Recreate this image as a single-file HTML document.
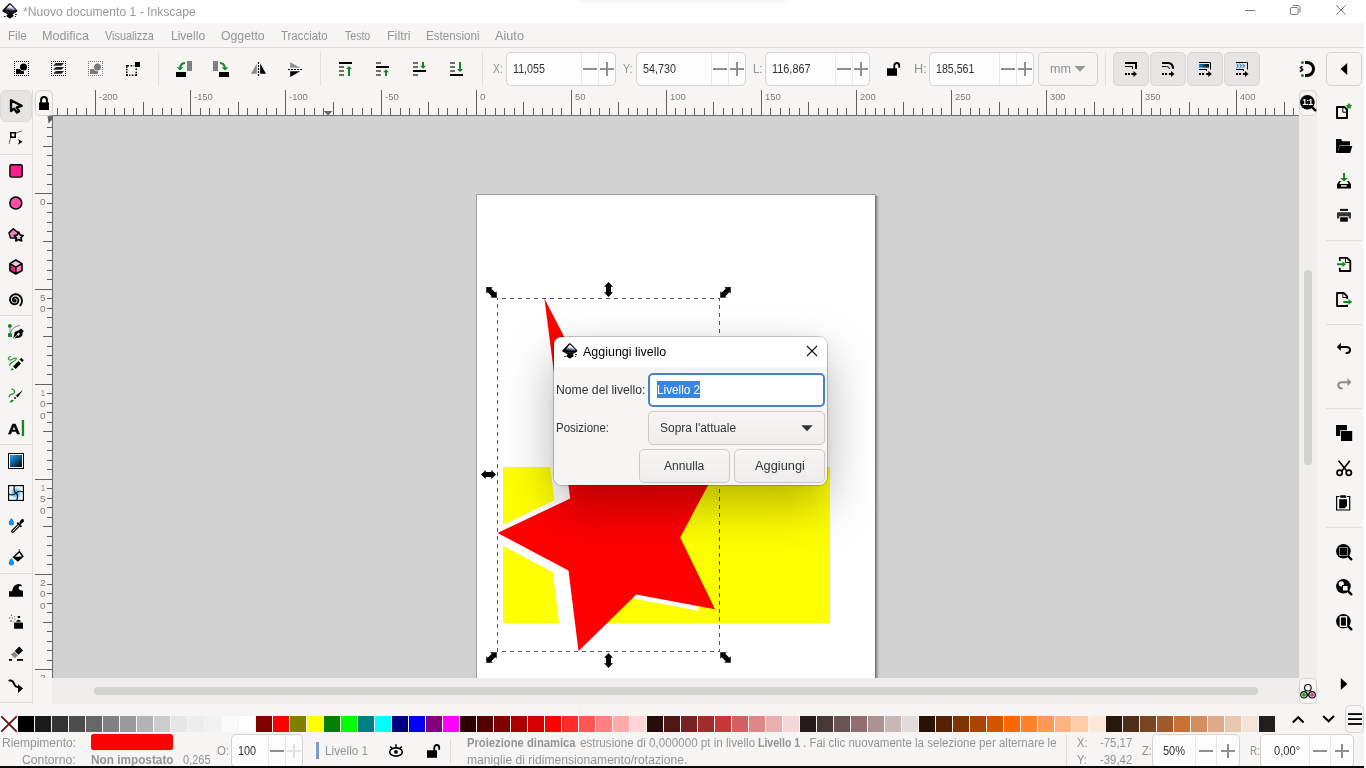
<!DOCTYPE html>
<html lang="it"><head><meta charset="utf-8"><title>*Nuovo documento 1 - Inkscape</title>
<style>
html,body{margin:0;padding:0}
body{width:1366px;height:768px;position:relative;overflow:hidden;background:#fff;font-family:"Liberation Sans",sans-serif;font-size:12px}
#win{position:absolute;left:0;top:0;width:1364px;height:766px;background:#f6f5f4;overflow:hidden;will-change:transform}
#win div,#win span.t,#win svg.i,#dlg div,#dlg span.t,#dlg svg.i{position:absolute;box-sizing:border-box}
span.t{white-space:nowrap}
svg.i{overflow:visible}
.sp{background:#fcfcfc;border:1px solid #d6d2ce;border-radius:5px}
.vl{background:#e3e0dd;width:1px}
.btn{border:1px solid #d6d2ce;border-radius:5px;background:#f6f5f4}
.tog{border:1px solid #d9d6d2;border-radius:5px;background:#e6e5e3}
#dlg{position:absolute;left:554px;top:337px;width:273px;height:148px;border-radius:8px;background:#f6f5f4;overflow:hidden;will-change:transform}
#dlgsh{position:absolute;left:554px;top:337px;width:273px;height:148px;border-radius:8px;box-shadow:0 0 0 1px rgba(0,0,0,.20),0 20px 50px rgba(0,0,0,.30),0 0 12px rgba(0,0,0,.05)}
</style></head><body>
<div id="win">
<div style="left:0px;top:0px;width:1364px;height:23px;background:#fff"></div>
<div style="left:576px;top:-15px;width:214px;height:14px;border-radius:7px;box-shadow:0 1px 7px rgba(0,0,0,.09)"></div>
<svg class="i" style="left:2px;top:3px;" width="16" height="16" viewBox="0 0 16 16"><defs><linearGradient id="ikg1" x1="0.62" y1="0.05" x2="0.35" y2="1"><stop offset="0" stop-color="#ffffff"/><stop offset="0.38" stop-color="#f0f4f9"/><stop offset="0.62" stop-color="#7186a0"/><stop offset="0.85" stop-color="#1a2430"/><stop offset="1" stop-color="#000"/></linearGradient></defs><path d="M7 0.600Q7.800 -0.200 8.600 0.600L15.200 7.200Q15.700 7.900 15 8.500L13.200 9.800H2.600L0.600 8.500Q-0.100 7.900 0.500 7.200z" fill="#000"/><path d="M7.900 1.400L14 7.300Q11 8.400 7.800 8.400T2.400 7.600z" fill="url(#ikg1)"/><path d="M2.600 9.400H13.200L11 11.200Q10.300 11.700 11 12.100L11.600 12.500Q12 12.900 11.500 13.300L8.600 15.200Q7.900 15.600 7.200 15.200L4.600 13.400Q4.100 13 4.600 12.600L5.300 12.100Q5.900 11.600 5.200 11.200z" fill="#000"/><ellipse cx="2.800" cy="13.400" rx="1" ry="0.500" fill="#000"/><ellipse cx="14" cy="11.500" rx="1" ry="0.500" fill="#000"/><ellipse cx="13.500" cy="13.400" rx="0.600" ry="0.500" fill="#000"/></svg>
<span class="t" style="top:4.00px;font-size:12px;line-height:16px;color:#9a9a9a;left:23.20px;transform:scaleX(1.0109);transform-origin:0 0;">*Nuovo documento 1 - Inkscape</span>
<svg class="i" style="left:1230px;top:0" width="134" height="23" viewBox="0 0 134 23" fill="none" stroke="#7a7a7a" stroke-width="1"><path d="M15 10.5h10"/><path d="M62.600 5.500H68Q70 5.500 70 7.500V12.600"/><rect x="60.500" y="7.500" width="7.600" height="7" rx="1.300"/><path d="M106.200 5.200l9.600 9.600M115.800 5.200l-9.600 9.600"/></svg>
<div style="left:0px;top:47px;width:1364px;height:1px;background:#dcd8d4"></div>
<span class="t" style="top:28.00px;font-size:12px;line-height:16px;color:#929595;left:7.75px;transform:scaleX(0.9653);transform-origin:0 0;">File</span>
<span class="t" style="top:28.00px;font-size:12px;line-height:16px;color:#929595;left:41.57px;transform:scaleX(1.0504);transform-origin:0 0;">Modifica</span>
<span class="t" style="top:28.00px;font-size:12px;line-height:16px;color:#929595;left:105.45px;transform:scaleX(0.9060);transform-origin:0 0;">Visualizza</span>
<span class="t" style="top:28.00px;font-size:12px;line-height:16px;color:#929595;left:170.91px;transform:scaleX(1.0021);transform-origin:0 0;">Livello</span>
<span class="t" style="top:28.00px;font-size:12px;line-height:16px;color:#929595;left:221.12px;transform:scaleX(1.0210);transform-origin:0 0;">Oggetto</span>
<span class="t" style="top:28.00px;font-size:12px;line-height:16px;color:#929595;left:281.14px;transform:scaleX(0.9532);transform-origin:0 0;">Tracciato</span>
<span class="t" style="top:28.00px;font-size:12px;line-height:16px;color:#929595;left:344.66px;transform:scaleX(0.8790);transform-origin:0 0;">Testo</span>
<span class="t" style="top:28.00px;font-size:12px;line-height:16px;color:#929595;left:386.78px;transform:scaleX(1.0400);transform-origin:0 0;">Filtri</span>
<span class="t" style="top:28.00px;font-size:12px;line-height:16px;color:#929595;left:425.85px;transform:scaleX(0.9669);transform-origin:0 0;">Estensioni</span>
<span class="t" style="top:28.00px;font-size:12px;line-height:16px;color:#929595;left:495.18px;transform:scaleX(1.0587);transform-origin:0 0;">Aiuto</span>
<svg class="i" style="left:14px;top:61px;" width="16" height="16" viewBox="0 0 16 16"><path d="M0 0.500H15M0 14.500H15" stroke="#000" stroke-width="1" stroke-dasharray="1 1" fill="none"/><path d="M0.500 2V14M14.500 2V14" stroke="#000" stroke-width="1" stroke-dasharray="1 1" fill="none"/><rect x="2" y="8" width="8" height="5" fill="#000"/><circle cx="9.500" cy="6" r="4.200" fill="#f6f5f4"/><circle cx="9.500" cy="6" r="3.500" fill="#000"/></svg>
<svg class="i" style="left:51px;top:61px;" width="16" height="16" viewBox="0 0 16 16"><path d="M0 0.500H15M0 14.500H15" stroke="#000" stroke-width="1" stroke-dasharray="1 1" fill="none"/><path d="M0.500 2V14M14.500 2V14" stroke="#000" stroke-width="1" stroke-dasharray="1 1" fill="none"/><path d="M4.800 2.100h8.200l-2.500 2.600h-8.300zM4.800 6.100h8.200l-2.500 2.700h-8.300zM4.800 10.100h8.200l-2.500 2.700h-8.300z" fill="#222"/></svg>
<svg class="i" style="left:88px;top:61px;" width="16" height="16" viewBox="0 0 16 16"><path d="M0 0.500H15M0 14.500H15" stroke="#7d7d7d" stroke-width="1" stroke-dasharray="1 1" fill="none"/><path d="M0.500 2V14M14.500 2V14" stroke="#7d7d7d" stroke-width="1" stroke-dasharray="1 1" fill="none"/><rect x="2" y="8" width="8" height="5" fill="#7a7a7a"/><circle cx="9.500" cy="6" r="4.200" fill="#f6f5f4"/><circle cx="9.500" cy="6" r="3.500" fill="#7a7a7a"/></svg>
<svg class="i" style="left:125px;top:61px;" width="16" height="16" viewBox="0 0 16 16"><path d="M1.750 7V4.750H4M5.600 4.750h1.600M8.600 4.750h1.500M11.250 7.500v1.600M11.250 10.700v1.500M11.250 13v1.250H9.800M8.400 14.250H6.800M5.400 14.250H4M3 14.250H1.750V13M1.750 12v-1.500M1.750 9.200V7.700" fill="none" stroke="#000" stroke-width="1.500"/><rect x="9.300" y="0.300" width="6.400" height="6.400" fill="#f6f5f4"/><rect x="10" y="1" width="5" height="5" fill="#000"/></svg>
<div class="vl" style="left:158px;top:52px;width:1px;height:34px;"></div>
<svg class="i" style="left:176px;top:61px;" width="16" height="16" viewBox="0 0 16 16"><rect x="11" y="0" width="5" height="10" fill="#808080"/><rect x="0" y="11" width="10" height="5" fill="#000"/><path d="M9 1.900q-4.300 0.300-4.900 4.800" fill="none" stroke="#12881f" stroke-width="2"/><path d="M0.800 6.200h6.600L4 9.600z" fill="#12881f"/></svg>
<svg class="i" style="left:213px;top:61px;" width="16" height="16" viewBox="0 0 16 16"><g transform="translate(16,0) scale(-1,1)"><rect x="11" y="0" width="5" height="10" fill="#808080"/><rect x="0" y="11" width="10" height="5" fill="#000"/><path d="M9 1.900q-4.300 0.300-4.900 4.800" fill="none" stroke="#12881f" stroke-width="2"/><path d="M0.800 6.200h6.600L4 9.600z" fill="#12881f"/></g></svg>
<svg class="i" style="left:250px;top:61px;" width="16" height="16" viewBox="0 0 16 16"><path d="M6.800 2.500V12.700H1z" fill="#8c8c8c"/><path d="M10.200 2.500V12.700H16z" fill="#000"/><path d="M8.500 1V15" stroke="#000" stroke-width="1.200" stroke-dasharray="2 1" fill="none"/></svg>
<svg class="i" style="left:287px;top:61px;" width="16" height="16" viewBox="0 0 16 16"><path d="M3.200 1.200V6.800H13.200z" fill="#8c8c8c"/><path d="M3.200 16V10.200H13.200z" fill="#000"/><path d="M1 8.500H15.500" stroke="#000" stroke-width="1.200" stroke-dasharray="2 1" fill="none"/></svg>
<div class="vl" style="left:320px;top:52px;width:1px;height:34px;"></div>
<svg class="i" style="left:338px;top:61px;" width="16" height="16" viewBox="0 0 16 16"><rect x="1" y="1" width="13" height="2" fill="#000"/><rect x="1" y="5" width="5" height="2" fill="#6e6e6e"/><rect x="1" y="9" width="5" height="2" fill="#6e6e6e"/><rect x="1" y="13" width="5" height="2" fill="#6e6e6e"/><path d="M10 15V8H8L11 5L14 8H12V15z" fill="#12881f"/></svg>
<svg class="i" style="left:375px;top:61px;" width="16" height="16" viewBox="0 0 16 16"><rect x="1" y="1" width="5" height="2" fill="#6e6e6e"/><rect x="1" y="5" width="13" height="2" fill="#000"/><rect x="1" y="9" width="5" height="2" fill="#6e6e6e"/><rect x="1" y="13" width="5" height="2" fill="#6e6e6e"/><path d="M10 15V11.2H8L11 8.2L14 11.2H12V15z" fill="#12881f"/></svg>
<svg class="i" style="left:412px;top:61px;" width="16" height="16" viewBox="0 0 16 16"><rect x="1" y="1" width="5" height="2" fill="#6e6e6e"/><rect x="1" y="5" width="5" height="2" fill="#6e6e6e"/><rect x="1" y="9" width="13" height="2" fill="#000"/><rect x="1" y="13" width="5" height="2" fill="#6e6e6e"/><path d="M10 1V4.8H8L11 7.8L14 4.8H12V1z" fill="#12881f"/></svg>
<svg class="i" style="left:449px;top:61px;" width="16" height="16" viewBox="0 0 16 16"><rect x="1" y="1" width="5" height="2" fill="#6e6e6e"/><rect x="1" y="5" width="5" height="2" fill="#6e6e6e"/><rect x="1" y="9" width="5" height="2" fill="#6e6e6e"/><rect x="1" y="13" width="13" height="2" fill="#000"/><path d="M10 1V8H8L11 11L14 8H12V1z" fill="#12881f"/></svg>
<div class="vl" style="left:482px;top:52px;width:1px;height:34px;"></div>
<span class="t" style="top:61.00px;font-size:12px;line-height:16px;color:#8f9191;left:493.36px;transform:scaleX(0.8724);transform-origin:0 0;">X:</span>
<div class="sp" style="left:506px;top:52px;width:110px;height:34px;"></div>
<div style="left:581px;top:53px;width:1px;height:32px;background:#ebe9e7"></div>
<div style="left:598px;top:53px;width:1px;height:32px;background:#ebe9e7"></div>
<svg class="i" style="left:0;top:0" width="1364" height="766" viewBox="0 0 1364 766"><rect x="583.0" y="68.0" width="14" height="2" fill="#8f8f8f"/><rect x="600.0" y="68.0" width="14" height="2" fill="#8f8f8f"/><rect x="606.0" y="62.0" width="2" height="14" fill="#8f8f8f"/></svg>
<span class="t" style="top:61.00px;font-size:12px;line-height:16px;color:#2e3436;left:513.48px;transform:scaleX(0.8927);transform-origin:0 0;">11,055</span>
<span class="t" style="top:61.00px;font-size:12px;line-height:16px;color:#8f9191;left:623.27px;transform:scaleX(0.8819);transform-origin:0 0;">Y:</span>
<div class="sp" style="left:636px;top:52px;width:110px;height:34px;"></div>
<div style="left:711px;top:53px;width:1px;height:32px;background:#ebe9e7"></div>
<div style="left:728px;top:53px;width:1px;height:32px;background:#ebe9e7"></div>
<svg class="i" style="left:0;top:0" width="1364" height="766" viewBox="0 0 1364 766"><rect x="713.0" y="68.0" width="14" height="2" fill="#8f8f8f"/><rect x="730.0" y="68.0" width="14" height="2" fill="#8f8f8f"/><rect x="736.0" y="62.0" width="2" height="14" fill="#8f8f8f"/></svg>
<span class="t" style="top:61.00px;font-size:12px;line-height:16px;color:#2e3436;left:643.37px;transform:scaleX(0.9006);transform-origin:0 0;">54,730</span>
<span class="t" style="top:61.00px;font-size:12px;line-height:16px;color:#8f9191;left:753.07px;transform:scaleX(0.9460);transform-origin:0 0;">L:</span>
<div class="sp" style="left:765px;top:52px;width:105px;height:34px;"></div>
<div style="left:835px;top:53px;width:1px;height:32px;background:#ebe9e7"></div>
<div style="left:852px;top:53px;width:1px;height:32px;background:#ebe9e7"></div>
<svg class="i" style="left:0;top:0" width="1364" height="766" viewBox="0 0 1364 766"><rect x="837.0" y="68.0" width="14" height="2" fill="#8f8f8f"/><rect x="854.0" y="68.0" width="14" height="2" fill="#8f8f8f"/><rect x="860.0" y="62.0" width="2" height="14" fill="#8f8f8f"/></svg>
<span class="t" style="top:61.00px;font-size:12px;line-height:16px;color:#2e3436;left:772.17px;transform:scaleX(0.9078);transform-origin:0 0;">116,867</span>
<svg class="i" style="left:886px;top:61px;" width="16" height="16" viewBox="0 0 16 16"><rect x="1" y="7.300" width="10" height="7.500" fill="#000"/><path d="M8.300 8V4.450a2.450 2.450 0 0 1 4.900 0V6.800" fill="none" stroke="#000" stroke-width="1.800"/></svg>
<span class="t" style="top:61.00px;font-size:12px;line-height:16px;color:#8f9191;left:913.66px;transform:scaleX(1.0585);transform-origin:0 0;">H:</span>
<div class="sp" style="left:929px;top:52px;width:105px;height:34px;"></div>
<div style="left:999px;top:53px;width:1px;height:32px;background:#ebe9e7"></div>
<div style="left:1016px;top:53px;width:1px;height:32px;background:#ebe9e7"></div>
<svg class="i" style="left:0;top:0" width="1364" height="766" viewBox="0 0 1364 766"><rect x="1001.0" y="68.0" width="14" height="2" fill="#8f8f8f"/><rect x="1018.0" y="68.0" width="14" height="2" fill="#8f8f8f"/><rect x="1024.0" y="62.0" width="2" height="14" fill="#8f8f8f"/></svg>
<span class="t" style="top:61.00px;font-size:12px;line-height:16px;color:#2e3436;left:936.19px;transform:scaleX(0.8835);transform-origin:0 0;">185,561</span>
<div class="btn" style="left:1038px;top:52px;width:60px;height:34px;"></div>
<span class="t" style="top:61.00px;font-size:12px;line-height:16px;color:#8f9191;left:1049.76px;transform:scaleX(1.0541);transform-origin:0 0;">mm</span>
<svg class="i" style="left:1074px;top:65px" width="12" height="8" viewBox="0 0 12 8"><path d="M0.500 1h11L6 6.800z" fill="#959595"/></svg>
<div class="vl" style="left:1105px;top:52px;width:1px;height:34px;"></div>
<div class="tog" style="left:1113px;top:52px;width:36px;height:34px;"></div>
<svg class="i" style="left:1123px;top:61px;" width="16" height="16" viewBox="0 0 16 16"><path d="M2 2H13V8" fill="none" stroke="#000" stroke-width="2"/><path d="M2 5.500H9.500V8" fill="none" stroke="#000" stroke-width="1"/><rect x="2" y="12" width="2" height="2"/><rect x="5" y="12" width="2" height="2"/><rect x="8.4" y="12" width="3" height="2"/><path d="M10.5 10.100L14 13L10.5 15.900z"/></svg>
<div class="tog" style="left:1150px;top:52px;width:36px;height:34px;"></div>
<svg class="i" style="left:1160px;top:61px;" width="16" height="16" viewBox="0 0 16 16"><path d="M2 2H8Q13 2 13 7.700" fill="none" stroke="#000" stroke-width="2"/><path d="M2 5.500H6.500Q9.500 5.500 9.500 8" fill="none" stroke="#000" stroke-width="1"/><rect x="2" y="12" width="2" height="2"/><rect x="5" y="12" width="2" height="2"/><rect x="8.9" y="12" width="3" height="2"/><path d="M11.0 10.100L14.5 13L11.0 15.900z"/></svg>
<div class="tog" style="left:1187px;top:52px;width:36px;height:34px;"></div>
<svg class="i" style="left:1197px;top:61px;" width="16" height="16" viewBox="0 0 16 16"><defs><linearGradient id="tg1" x1="0" x2="1"><stop offset="0" stop-color="#1b86d6"/><stop offset="0.75" stop-color="#031a2c"/><stop offset="1" stop-color="#000"/></linearGradient></defs><rect x="1" y="2.500" width="2" height="4.500" fill="#bfe6ff"/><rect x="2" y="3" width="10" height="3.600" fill="url(#tg1)"/><path d="M2 1.500H13.500V8.500" fill="none" stroke="#000" stroke-width="1"/><path d="M2 8.500H9.500V10" fill="none" stroke="#000" stroke-width="1"/><rect x="2" y="12" width="2" height="2"/><rect x="5" y="12" width="2" height="2"/><rect x="9.200000000000001" y="12" width="3" height="2"/><path d="M11.3 10.100L14.8 13L11.3 15.900z"/></svg>
<div class="tog" style="left:1224px;top:52px;width:36px;height:34px;"></div>
<svg class="i" style="left:1234px;top:61px;" width="16" height="16" viewBox="0 0 16 16"><rect x="1.800" y="2.600" width="9.700" height="4.600" fill="#c4e9ff"/><path d="M2.500 3l2 1.900-2 1.900M5.500 3l2 1.900-2 1.900M8.500 3l2 1.900-2 1.900" fill="none" stroke="#0b2d4a" stroke-width="0.900"/><path d="M2 1.500H13.500V8.500" fill="none" stroke="#000" stroke-width="1"/><path d="M2 8.500H9.500V10" fill="none" stroke="#000" stroke-width="1"/><rect x="2" y="12" width="2" height="2"/><rect x="5" y="12" width="2" height="2"/><rect x="8.9" y="12" width="3" height="2"/><path d="M11.0 10.100L14.5 13L11.0 15.900z"/></svg>
<svg class="i" style="left:1299px;top:61px;" width="16" height="16" viewBox="0 0 16 16"><path d="M6 1.500H8A6.500 6.500 0 0 1 8 14.500H6" fill="none" stroke="#000" stroke-width="3"/><circle cx="3.400" cy="1.500" r="1.500" fill="#12881f"/><circle cx="3.400" cy="14.600" r="1.500" fill="#12881f"/><path d="M3.700 5.500q-2.700 0.500-2.200 1.500t1.900 1.200q1 0.900-2.600 2.300" fill="none" stroke="#000" stroke-width="1.600"/></svg>
<div class="btn" style="left:1326px;top:52px;width:36px;height:34px;"></div>
<svg class="i" style="left:1340px;top:63px" width="8" height="12" viewBox="0 0 8 12"><path d="M7.200 -0.100V12.100L0.600 6z" fill="#000"/></svg>
<div style="left:32px;top:90px;width:1px;height:614px;background:#e0dcd8"></div>
<div style="left:0px;top:90px;width:32px;height:32px;background:#e5e4e1;border-radius:6px;border:1px solid #dcdad6"></div>
<svg class="i" style="left:8px;top:98px;" width="16" height="16" viewBox="0 0 16 16"><path d="M3 2.200V13L6.100 10.700L8.900 14.600L11.100 13.300L8.800 9.400L13.600 7.800z" fill="#e5e4e1" stroke="#000" stroke-width="2.300" stroke-linejoin="round"/></svg>
<svg class="i" style="left:8px;top:130px;" width="16" height="16" viewBox="0 0 16 16"><path d="M8 3.200Q11 1.400 14.200 1M2.600 8.200Q1.400 11 1.200 13.800" fill="none" stroke="#222" stroke-width="0.700"/><rect x="2.800" y="2.800" width="4.400" height="4.400" fill="#fff" stroke="#000" stroke-width="1.600"/><path d="M9.900 9.100L14.500 11.800L9.900 14.700L11.300 11.800z" fill="#000"/></svg>
<svg class="i" style="left:8px;top:163px;" width="16" height="16" viewBox="0 0 16 16"><rect x="1.900" y="1.700" width="12.300" height="12.400" rx="1.600" fill="#fc1f8d" stroke="#000" stroke-width="1.400"/></svg>
<svg class="i" style="left:8px;top:195px;" width="16" height="16" viewBox="0 0 16 16"><circle cx="7.800" cy="8.100" r="6" fill="#f84fa5" stroke="#000" stroke-width="1.500"/></svg>
<svg class="i" style="left:8px;top:227px;" width="16" height="16" viewBox="0 0 16 16"><path d="M5.300 1.900L1 5.900L2.500 10.900H8.300L10 5.500z" fill="#ee86c3" stroke="#000" stroke-width="1.500" stroke-linejoin="round"/><path d="M10.700 5.100l1.400 2.900 3.200 0.500-2.300 2.200 0.600 3.200-2.900-1.500-2.900 1.500 0.600-3.200-2.300-2.200 3.200-0.500z" fill="#fad0e8" stroke="#000" stroke-width="1.700" stroke-linejoin="round"/></svg>
<svg class="i" style="left:8px;top:259px;" width="16" height="16" viewBox="0 0 16 16"><path d="M7.800 1L14 4.600V11.500L7.800 15L1.900 11.500V4.600z" fill="#e2207f"/><path d="M7.800 1L14 4.600L7.800 8.100L1.900 4.600z" fill="#f6c3e2"/><path d="M7.800 8.100L14 4.600V11.500L7.800 15z" fill="#f27fbb"/><path d="M7.800 1L14 4.600V11.500L7.800 15L1.900 11.500V4.600zM1.900 4.600L7.800 8.100L14 4.600M7.800 8.100V15" fill="none" stroke="#000" stroke-width="1.600" stroke-linejoin="round"/></svg>
<svg class="i" style="left:8px;top:291px;" width="16" height="16" viewBox="0 0 16 16"><path d="M7.40 9.10L7.47 9.16L7.54 9.23L7.59 9.33L7.63 9.43L7.65 9.55L7.64 9.68L7.62 9.81L7.57 9.95L7.50 10.08L7.40 10.21L7.28 10.32L7.14 10.43L6.98 10.51L6.80 10.55L6.61 10.56L6.41 10.56L6.21 10.52L6.01 10.46L5.82 10.37L5.63 10.25L5.45 10.10L5.29 9.93L5.15 9.74L5.04 9.52L4.95 9.28L4.89 9.03L4.87 8.76L4.88 8.49L4.93 8.22L5.01 7.95L5.13 7.69L5.28 7.44L5.46 7.20L5.68 6.99L5.93 6.80L6.20 6.65L6.50 6.52L6.81 6.43L7.14 6.38L7.48 6.38L7.82 6.41L8.16 6.49L8.50 6.61L8.82 6.77L9.12 6.98L9.40 7.22L9.65 7.51L9.87 7.82L10.05 8.17L10.18 8.54L10.28 8.93L10.33 9.33L10.34 9.75L10.29 10.17L10.19 10.59L10.04 11.00L9.83 11.39L9.58 11.77L9.27 12.11L8.92 12.42L8.52 12.69L8.09 12.90L7.63 13.07L7.14 13.18L6.64 13.23L6.13 13.21L5.61 13.14L5.10 12.99L4.61 12.78L4.14 12.51L3.70 12.18L3.29 11.79L2.94 11.35L2.64 10.86L2.40 10.33L2.22 9.77L2.11 9.19L2.07 8.58L2.10 7.97L2.21 7.36L2.39 6.75L2.66 6.17L2.99 5.62L3.40 5.10L3.87 4.64L4.41 4.23L5.00 3.88L5.63 3.61L6.30 3.41L7.00 3.30L7.72 3.26L8.44 3.31L9.17 3.45L9.88 3.68L10.57 4.00L11.22 4.41L11.83 4.90L12.38 5.47L12.85 6.12L13.25 6.82L13.57 7.58L13.79 8.39L13.91 9.22L13.93 10.07L13.84 10.93L13.64 11.78L13.34 12.61L12.93 13.41L12.42 14.16L11.82 14.85" fill="none" stroke="#000" stroke-width="1.9" stroke-linecap="butt" stroke-linejoin="round"/><circle cx="7.1" cy="9" r="1.1" fill="#000"/></svg>
<svg class="i" style="left:8px;top:324px;" width="16" height="16" viewBox="0 0 16 16"><g transform="translate(0,-0.900)"><path d="M1.900 3V10" stroke="#8a8a8a" stroke-width="0.900" fill="none"/><path d="M2.300 10.200Q4 3.400 11.700 2.400" fill="none" stroke="#555" stroke-width="0.800"/><circle cx="1.900" cy="2.800" r="1.950" fill="#12881f"/><rect x="0" y="10.100" width="3.900" height="3.900" fill="#12881f"/><path d="M5.300 15.500L6.700 9L11.300 6.800L13 5.500L15.800 8L14.600 9.400L14.200 12.600L12.200 14.500z" fill="#000"/><path d="M8.700 11.500L10.400 9.500L12 10.900L10.300 12.800z" fill="#f6f5f4"/><path d="M5.700 15.200L9.200 12.100" stroke="#f6f5f4" stroke-width="0.800" fill="none"/></g></svg>
<svg class="i" style="left:8px;top:356px;" width="16" height="16" viewBox="0 0 16 16"><path d="M2.600 0.500Q0.200 1 0.400 2.600Q1 4.600 3 4L6.500 2.300Q8.500 1.600 8.300 3Q8 4.500 4.500 6.100Q2 7.300 1.600 9.400" fill="none" stroke="#2a9338" stroke-width="1.200" stroke-linecap="round"/><path d="M5.060 10.400L10.400 4.900L13 7.400L7.700 12.900z" fill="#000"/><path d="M11.300 3.500L13.300 1.900L15.800 4.300L14.400 6z" fill="#000"/><path d="M2.600 14.800L3.800 11.800L6.100 13.600z" fill="#12881f"/></svg>
<svg class="i" style="left:8px;top:388px;" width="16" height="16" viewBox="0 0 16 16"><path d="M4.100 1Q7 2.200 6.600 4.100Q6 6 3.500 6.300Q1.600 6.600 1.300 8.500" fill="none" stroke="#1d8a2a" stroke-width="1.300" stroke-linecap="round"/><path d="M14.900 2L8 7.400L9.600 9.500z" fill="#000"/><path d="M6.200 9.400L7.200 8.800L8.200 10.500L6.600 11z" fill="#000"/><path d="M3 12Q5 11.500 6 12.500Q4.500 14.300 1.200 14.800Q2.500 13.500 3 12z" fill="#12881f"/></svg>
<svg class="i" style="left:8px;top:420px;" width="16" height="16" viewBox="0 0 16 16"><text x="6" y="13.800" font-family="Liberation Sans,sans-serif" font-weight="bold" font-size="15.500" text-anchor="middle" fill="#000" stroke="#000" stroke-width="0.500" textLength="12" lengthAdjust="spacingAndGlyphs">A</text><rect x="13.800" y="0" width="2.300" height="16" fill="#12881f"/></svg>
<svg class="i" style="left:8px;top:453px;" width="16" height="16" viewBox="0 0 16 16"><defs><linearGradient id="tg2" x1="0.100" y1="0" x2="0.900" y2="1"><stop offset="0" stop-color="#2b9ce6"/><stop offset="0.550" stop-color="#0b4f80"/><stop offset="1" stop-color="#010a12"/></linearGradient></defs><rect x="0.500" y="0.500" width="15" height="15" fill="#fff" stroke="#000" stroke-width="1"/><rect x="2" y="2" width="12" height="12" fill="url(#tg2)"/></svg>
<svg class="i" style="left:8px;top:485px;" width="16" height="16" viewBox="0 0 16 16"><defs><radialGradient id="tg3"><stop offset="0" stop-color="#1f8fd6"/><stop offset="0.400" stop-color="#7cc6ee"/><stop offset="0.850" stop-color="#eef8ff"/><stop offset="1" stop-color="#ffffff"/></radialGradient></defs><rect x="0.600" y="0.600" width="14.800" height="14.800" fill="url(#tg3)" stroke="#000" stroke-width="1.200"/><path d="M6.500 0.600C5.500 4 6.500 7 8 8C9.500 9 10.300 12 8.600 15.400M0.600 9.200C4 10.300 7 9.300 8 8C9 6.700 12 5.800 15.400 6.800" fill="none" stroke="#04121f" stroke-width="1.200"/></svg>
<svg class="i" style="left:8px;top:517px;" width="16" height="16" viewBox="0 0 16 16"><path d="M3.4 1q2.900 3.500 2.700 4.700a2.700 2.700 0 0 1-5.400 0q-0.200-1.200 2.700-4.700z" fill="#1c92dc"/><path d="M10.500 7.200L4.200 13.500Q3.300 14.600 3.900 15.200T5.600 14.900L11.900 8.600" fill="#fff" stroke="#000" stroke-width="1.200"/><path d="M9.300 5.700L13.400 9.800" stroke="#000" stroke-width="1.800" fill="none"/><path d="M11.300 6.300Q12 3.200 13.700 2.300T15.900 3.300T14.800 5.500Q13.200 6.400 12.900 7.900z" fill="#000"/></svg>
<svg class="i" style="left:8px;top:549px;" width="16" height="16" viewBox="0 0 16 16"><path d="M3.4 9q2.900 3.500 2.700 4.700a2.700 2.700 0 0 1-5.400 0q-0.200-1.200 2.700-4.700z" fill="#1c92dc"/><path d="M4.500 8.200L11.600 1.600L15.800 7.400L9.900 12.800z" fill="#000"/><path d="M7 7.700L11.400 3.800L13.900 7.400z" fill="#fff"/><path d="M11.600 1.600L11 0.200" stroke="#000" stroke-width="1" fill="none"/></svg>
<svg class="i" style="left:8px;top:581.3px;" width="16" height="16" viewBox="0 0 16 16"><path d="M1 15.800V10.300H4.200Q4.600 5.300 8 3.700T13.800 4.200Q14.400 5 13.400 5.200Q11.500 4.600 10.700 6T11.600 8.700Q12.700 9.700 14 9.300L15 10.300V15.800z" fill="#000"/></svg>
<svg class="i" style="left:8px;top:613.2px;" width="16" height="16" viewBox="0 0 16 16"><path d="M6 15.800V10.500Q6 9.500 7 9.500H14Q15 9.500 15 10.500V15.800z" fill="#000"/><path d="M8.200 8.700Q8.500 6.800 10.500 6.800T12.800 8.700z" fill="#000"/><rect x="9.700" y="3" width="2.400" height="2" rx="0.500" fill="#000"/><g fill="#6f6f6f"><circle cx="3.500" cy="2.300" r="0.750"/><circle cx="1.500" cy="5" r="0.750"/><circle cx="4.300" cy="5" r="0.700"/><circle cx="6.500" cy="3.700" r="0.600"/><circle cx="7" cy="6.200" r="0.600"/><circle cx="3" cy="8" r="0.900"/><circle cx="5.800" cy="8.300" r="0.500"/></g></svg>
<svg class="i" style="left:8px;top:644.3px;" width="16" height="16" viewBox="0 0 16 16"><path d="M11.200 2.600L15 6.500L10.500 10.800L6.800 7z" fill="#000"/><path d="M6.300 7.500L10 11.200L6.700 14.300L3 10.600z" fill="#858585"/><rect x="1" y="15" width="3" height="1.800" fill="#000"/><rect x="9" y="15" width="6" height="1.800" fill="#000"/></svg>
<svg class="i" style="left:8px;top:678px;" width="16" height="16" viewBox="0 0 16 16"><path d="M1.400 2.600Q4.500 2 5.600 4.800T8.300 8.600Q9.500 9.200 11 9.500" fill="none" stroke="#000" stroke-width="2" stroke-linecap="round"/><path d="M10 6.200L15 10.500L10 15z" fill="#000"/></svg>
<div style="left:0px;top:154px;width:32px;height:1px;background:#e0dcd8"></div>
<div style="left:0px;top:315px;width:32px;height:1px;background:#e0dcd8"></div>
<div style="left:0px;top:444px;width:32px;height:1px;background:#e0dcd8"></div>
<div style="left:0px;top:573px;width:32px;height:1px;background:#e0dcd8"></div>
<div style="left:0px;top:702px;width:32px;height:1px;background:#e0dcd8"></div>
<svg class="i" style="left:0;top:90px" width="1300" height="26" viewBox="0 0 1300 26" fill="#606060"><rect x="57" y="18" width="1" height="8"/><rect x="67" y="18" width="1" height="8"/><rect x="76" y="18" width="1" height="8"/><rect x="86" y="18" width="1" height="8"/><rect x="95" y="0" width="1" height="26"/><rect x="105" y="18" width="1" height="8"/><rect x="114" y="18" width="1" height="8"/><rect x="124" y="18" width="1" height="8"/><rect x="133" y="18" width="1" height="8"/><rect x="143" y="12" width="1" height="14"/><rect x="152" y="18" width="1" height="8"/><rect x="162" y="18" width="1" height="8"/><rect x="171" y="18" width="1" height="8"/><rect x="181" y="18" width="1" height="8"/><rect x="190" y="0" width="1" height="26"/><rect x="200" y="18" width="1" height="8"/><rect x="209" y="18" width="1" height="8"/><rect x="219" y="18" width="1" height="8"/><rect x="228" y="18" width="1" height="8"/><rect x="238" y="12" width="1" height="14"/><rect x="247" y="18" width="1" height="8"/><rect x="257" y="18" width="1" height="8"/><rect x="266" y="18" width="1" height="8"/><rect x="276" y="18" width="1" height="8"/><rect x="285" y="0" width="1" height="26"/><rect x="295" y="18" width="1" height="8"/><rect x="304" y="18" width="1" height="8"/><rect x="314" y="18" width="1" height="8"/><rect x="323" y="18" width="1" height="8"/><rect x="333" y="12" width="1" height="14"/><rect x="342" y="18" width="1" height="8"/><rect x="352" y="18" width="1" height="8"/><rect x="362" y="18" width="1" height="8"/><rect x="371" y="18" width="1" height="8"/><rect x="381" y="0" width="1" height="26"/><rect x="390" y="18" width="1" height="8"/><rect x="400" y="18" width="1" height="8"/><rect x="409" y="18" width="1" height="8"/><rect x="419" y="18" width="1" height="8"/><rect x="428" y="12" width="1" height="14"/><rect x="438" y="18" width="1" height="8"/><rect x="447" y="18" width="1" height="8"/><rect x="457" y="18" width="1" height="8"/><rect x="466" y="18" width="1" height="8"/><rect x="476" y="0" width="1" height="26"/><rect x="485" y="18" width="1" height="8"/><rect x="495" y="18" width="1" height="8"/><rect x="504" y="18" width="1" height="8"/><rect x="514" y="18" width="1" height="8"/><rect x="523" y="12" width="1" height="14"/><rect x="533" y="18" width="1" height="8"/><rect x="542" y="18" width="1" height="8"/><rect x="552" y="18" width="1" height="8"/><rect x="561" y="18" width="1" height="8"/><rect x="571" y="0" width="1" height="26"/><rect x="580" y="18" width="1" height="8"/><rect x="590" y="18" width="1" height="8"/><rect x="599" y="18" width="1" height="8"/><rect x="609" y="18" width="1" height="8"/><rect x="618" y="12" width="1" height="14"/><rect x="628" y="18" width="1" height="8"/><rect x="637" y="18" width="1" height="8"/><rect x="647" y="18" width="1" height="8"/><rect x="656" y="18" width="1" height="8"/><rect x="666" y="0" width="1" height="26"/><rect x="675" y="18" width="1" height="8"/><rect x="685" y="18" width="1" height="8"/><rect x="694" y="18" width="1" height="8"/><rect x="704" y="18" width="1" height="8"/><rect x="713" y="12" width="1" height="14"/><rect x="723" y="18" width="1" height="8"/><rect x="732" y="18" width="1" height="8"/><rect x="742" y="18" width="1" height="8"/><rect x="751" y="18" width="1" height="8"/><rect x="761" y="0" width="1" height="26"/><rect x="770" y="18" width="1" height="8"/><rect x="780" y="18" width="1" height="8"/><rect x="789" y="18" width="1" height="8"/><rect x="799" y="18" width="1" height="8"/><rect x="808" y="12" width="1" height="14"/><rect x="818" y="18" width="1" height="8"/><rect x="827" y="18" width="1" height="8"/><rect x="837" y="18" width="1" height="8"/><rect x="846" y="18" width="1" height="8"/><rect x="856" y="0" width="1" height="26"/><rect x="865" y="18" width="1" height="8"/><rect x="875" y="18" width="1" height="8"/><rect x="884" y="18" width="1" height="8"/><rect x="894" y="18" width="1" height="8"/><rect x="903" y="12" width="1" height="14"/><rect x="913" y="18" width="1" height="8"/><rect x="922" y="18" width="1" height="8"/><rect x="932" y="18" width="1" height="8"/><rect x="941" y="18" width="1" height="8"/><rect x="951" y="0" width="1" height="26"/><rect x="960" y="18" width="1" height="8"/><rect x="970" y="18" width="1" height="8"/><rect x="979" y="18" width="1" height="8"/><rect x="989" y="18" width="1" height="8"/><rect x="999" y="12" width="1" height="14"/><rect x="1008" y="18" width="1" height="8"/><rect x="1018" y="18" width="1" height="8"/><rect x="1027" y="18" width="1" height="8"/><rect x="1037" y="18" width="1" height="8"/><rect x="1046" y="0" width="1" height="26"/><rect x="1056" y="18" width="1" height="8"/><rect x="1065" y="18" width="1" height="8"/><rect x="1075" y="18" width="1" height="8"/><rect x="1084" y="18" width="1" height="8"/><rect x="1094" y="12" width="1" height="14"/><rect x="1103" y="18" width="1" height="8"/><rect x="1113" y="18" width="1" height="8"/><rect x="1122" y="18" width="1" height="8"/><rect x="1132" y="18" width="1" height="8"/><rect x="1141" y="0" width="1" height="26"/><rect x="1151" y="18" width="1" height="8"/><rect x="1160" y="18" width="1" height="8"/><rect x="1170" y="18" width="1" height="8"/><rect x="1179" y="18" width="1" height="8"/><rect x="1189" y="12" width="1" height="14"/><rect x="1198" y="18" width="1" height="8"/><rect x="1208" y="18" width="1" height="8"/><rect x="1217" y="18" width="1" height="8"/><rect x="1227" y="18" width="1" height="8"/><rect x="1236" y="0" width="1" height="26"/><rect x="1246" y="18" width="1" height="8"/><rect x="1255" y="18" width="1" height="8"/><rect x="1265" y="18" width="1" height="8"/><rect x="1274" y="18" width="1" height="8"/><rect x="1284" y="12" width="1" height="14"/><rect x="1293" y="18" width="1" height="8"/></svg>
<span class="t" style="top:90.00px;font-size:9.5px;line-height:13.5px;color:#7c7c7c;left:99.08px;transform:scaleX(0.9879);transform-origin:0 0;">-200</span>
<span class="t" style="top:90.00px;font-size:9.5px;line-height:13.5px;color:#7c7c7c;left:194.08px;transform:scaleX(0.9879);transform-origin:0 0;">-150</span>
<span class="t" style="top:90.00px;font-size:9.5px;line-height:13.5px;color:#7c7c7c;left:289.08px;transform:scaleX(0.9879);transform-origin:0 0;">-100</span>
<span class="t" style="top:90.00px;font-size:9.5px;line-height:13.5px;color:#7c7c7c;left:385.08px;transform:scaleX(0.9971);transform-origin:0 0;">-50</span>
<span class="t" style="top:90.00px;font-size:9.5px;line-height:13.5px;color:#7c7c7c;left:480.12px;transform:scaleX(1.0129);transform-origin:0 0;">0</span>
<span class="t" style="top:90.00px;font-size:9.5px;line-height:13.5px;color:#7c7c7c;left:575.12px;transform:scaleX(0.9882);transform-origin:0 0;">50</span>
<span class="t" style="top:90.00px;font-size:9.5px;line-height:13.5px;color:#7c7c7c;left:669.77px;transform:scaleX(1.0030);transform-origin:0 0;">100</span>
<span class="t" style="top:90.00px;font-size:9.5px;line-height:13.5px;color:#7c7c7c;left:764.77px;transform:scaleX(1.0030);transform-origin:0 0;">150</span>
<span class="t" style="top:90.00px;font-size:9.5px;line-height:13.5px;color:#7c7c7c;left:860.03px;transform:scaleX(0.9866);transform-origin:0 0;">200</span>
<span class="t" style="top:90.00px;font-size:9.5px;line-height:13.5px;color:#7c7c7c;left:955.03px;transform:scaleX(0.9866);transform-origin:0 0;">250</span>
<span class="t" style="top:90.00px;font-size:9.5px;line-height:13.5px;color:#7c7c7c;left:1050.15px;transform:scaleX(0.9790);transform-origin:0 0;">300</span>
<span class="t" style="top:90.00px;font-size:9.5px;line-height:13.5px;color:#7c7c7c;left:1145.15px;transform:scaleX(0.9790);transform-origin:0 0;">350</span>
<span class="t" style="top:90.00px;font-size:9.5px;line-height:13.5px;color:#7c7c7c;left:1240.29px;transform:scaleX(0.9698);transform-origin:0 0;">400</span>
<svg class="i" style="left:33px;top:116px" width="19" height="562" viewBox="0 0 19 562" fill="#606060"><rect x="14" y="11" width="5" height="1"/><rect x="14" y="20" width="5" height="1"/><rect x="10" y="30" width="9" height="1"/><rect x="14" y="39" width="5" height="1"/><rect x="14" y="49" width="5" height="1"/><rect x="14" y="58" width="5" height="1"/><rect x="14" y="68" width="5" height="1"/><rect x="2" y="77" width="17" height="1"/><rect x="14" y="87" width="5" height="1"/><rect x="14" y="96" width="5" height="1"/><rect x="14" y="106" width="5" height="1"/><rect x="14" y="115" width="5" height="1"/><rect x="10" y="125" width="9" height="1"/><rect x="14" y="134" width="5" height="1"/><rect x="14" y="144" width="5" height="1"/><rect x="14" y="154" width="5" height="1"/><rect x="14" y="163" width="5" height="1"/><rect x="2" y="173" width="17" height="1"/><rect x="14" y="182" width="5" height="1"/><rect x="14" y="192" width="5" height="1"/><rect x="14" y="201" width="5" height="1"/><rect x="14" y="211" width="5" height="1"/><rect x="10" y="220" width="9" height="1"/><rect x="14" y="230" width="5" height="1"/><rect x="14" y="239" width="5" height="1"/><rect x="14" y="249" width="5" height="1"/><rect x="14" y="258" width="5" height="1"/><rect x="2" y="268" width="17" height="1"/><rect x="14" y="277" width="5" height="1"/><rect x="14" y="287" width="5" height="1"/><rect x="14" y="296" width="5" height="1"/><rect x="14" y="306" width="5" height="1"/><rect x="10" y="315" width="9" height="1"/><rect x="14" y="325" width="5" height="1"/><rect x="14" y="334" width="5" height="1"/><rect x="14" y="344" width="5" height="1"/><rect x="14" y="353" width="5" height="1"/><rect x="2" y="363" width="17" height="1"/><rect x="14" y="372" width="5" height="1"/><rect x="14" y="382" width="5" height="1"/><rect x="14" y="391" width="5" height="1"/><rect x="14" y="401" width="5" height="1"/><rect x="10" y="410" width="9" height="1"/><rect x="14" y="420" width="5" height="1"/><rect x="14" y="429" width="5" height="1"/><rect x="14" y="439" width="5" height="1"/><rect x="14" y="448" width="5" height="1"/><rect x="2" y="458" width="17" height="1"/><rect x="14" y="468" width="5" height="1"/><rect x="14" y="477" width="5" height="1"/><rect x="14" y="487" width="5" height="1"/><rect x="14" y="496" width="5" height="1"/><rect x="10" y="506" width="9" height="1"/><rect x="14" y="515" width="5" height="1"/><rect x="14" y="525" width="5" height="1"/><rect x="14" y="534" width="5" height="1"/><rect x="14" y="544" width="5" height="1"/><rect x="2" y="553" width="17" height="1"/></svg>
<div style="left:33px;top:116px;width:19px;height:562px;overflow:hidden">
<span class="t" style="top:79.00px;font-size:9.5px;line-height:13.5px;color:#7c7c7c;left:6.81px;transform:scaleX(1.0570);transform-origin:0 0;">0</span>
<span class="t" style="top:175.00px;font-size:9.5px;line-height:13.5px;color:#7c7c7c;left:6.79px;transform:scaleX(1.0657);transform-origin:0 0;">5</span>
<span class="t" style="top:186.00px;font-size:9.5px;line-height:13.5px;color:#7c7c7c;left:6.81px;transform:scaleX(1.0570);transform-origin:0 0;">0</span>
<span class="t" style="top:270.00px;font-size:9.5px;line-height:13.5px;color:#7c7c7c;left:7.87px;transform:scaleX(0.7324);transform-origin:0 0;">1</span>
<span class="t" style="top:281.00px;font-size:9.5px;line-height:13.5px;color:#7c7c7c;left:6.81px;transform:scaleX(1.0570);transform-origin:0 0;">0</span>
<span class="t" style="top:293.00px;font-size:9.5px;line-height:13.5px;color:#7c7c7c;left:6.81px;transform:scaleX(1.0570);transform-origin:0 0;">0</span>
<span class="t" style="top:365.00px;font-size:9.5px;line-height:13.5px;color:#7c7c7c;left:7.87px;transform:scaleX(0.7324);transform-origin:0 0;">1</span>
<span class="t" style="top:376.00px;font-size:9.5px;line-height:13.5px;color:#7c7c7c;left:6.79px;transform:scaleX(1.0657);transform-origin:0 0;">5</span>
<span class="t" style="top:388.00px;font-size:9.5px;line-height:13.5px;color:#7c7c7c;left:6.81px;transform:scaleX(1.0570);transform-origin:0 0;">0</span>
<span class="t" style="top:460.00px;font-size:9.5px;line-height:13.5px;color:#7c7c7c;left:6.67px;transform:scaleX(1.1091);transform-origin:0 0;">2</span>
<span class="t" style="top:471.00px;font-size:9.5px;line-height:13.5px;color:#7c7c7c;left:6.81px;transform:scaleX(1.0570);transform-origin:0 0;">0</span>
<span class="t" style="top:483.00px;font-size:9.5px;line-height:13.5px;color:#7c7c7c;left:6.81px;transform:scaleX(1.0570);transform-origin:0 0;">0</span>
<span class="t" style="top:555.00px;font-size:9.5px;line-height:13.5px;color:#7c7c7c;left:6.67px;transform:scaleX(1.1091);transform-origin:0 0;">2</span>
<span class="t" style="top:566.00px;font-size:9.5px;line-height:13.5px;color:#7c7c7c;left:6.79px;transform:scaleX(1.0657);transform-origin:0 0;">5</span>
<span class="t" style="top:578.00px;font-size:9.5px;line-height:13.5px;color:#7c7c7c;left:6.81px;transform:scaleX(1.0570);transform-origin:0 0;">0</span>
</div>
<svg class="i" style="left:323px;top:111px" width="10" height="5" viewBox="0 0 10 5"><path d="M0.500 0h9L5 4.500z" fill="#646464"/></svg>
<svg class="i" style="left:47px;top:115px" width="5" height="10" viewBox="0 0 5 10"><path d="M0.500 0.500L5 0.500V5L1.500 8.500z" fill="#646464"/></svg>
<div class="btn" style="left:35px;top:90px;width:18px;height:26px;background:#f6f5f4"></div>
<svg class="i" style="left:38px;top:96px;" width="12" height="14" viewBox="0 0 12 14"><rect x="1" y="6.400" width="10" height="7.600" fill="#000"/><path d="M3.100 7V3.900a2.900 2.900 0 0 1 5.800 0V7" fill="none" stroke="#000" stroke-width="2"/></svg>
<div id="cv" style="left:52px;top:115px;width:1247px;height:563px;background:#d1d1d1;border-left:1px solid #6b6b6b;border-top:1px solid #6b6b6b;overflow:hidden">
<svg style="position:absolute;left:0;top:0" width="1247" height="562" viewBox="53 116 1247 562"><defs><linearGradient id="psh" x1="0" x2="1" y1="0" y2="0"><stop offset="0" stop-color="#6e6e6e"/><stop offset="0.35" stop-color="#9a9a9a"/><stop offset="1" stop-color="#cfcfcf" stop-opacity="0"/></linearGradient></defs><rect x="476" y="194" width="400" height="500" fill="#a0a0a0"/><rect x="875" y="196" width="5" height="500" fill="url(#psh)"/><rect x="477" y="195" width="398" height="500" fill="#fff"/><rect x="503" y="467" width="327" height="156" fill="#ffff00"/><polygon points="528.7,300.3 616.3,469.8 703.7,465.8 664.5,539.2 699.3,611.0 620.6,596.3 562.8,652.8 552.8,572.3 481.9,534.8 554.5,500.3" fill="#fff"/><polygon points="544.4,298.5 632.0,468.0 719.4,464.0 680.2,537.4 715.0,609.2 636.3,594.5 578.5,651.0 568.5,570.5 497.6,533.0 570.2,498.5" fill="#ff0000"/><g fill="none" stroke="#524d90" stroke-width="1" stroke-dasharray="4 4" style="mix-blend-mode:multiply"><path d="M497 298.500H720" stroke-dashoffset="3"/><path d="M497 651.500H720" stroke-dashoffset="3"/><path d="M497.500 298V652" stroke-dashoffset="2"/><path d="M719.500 298V652" stroke-dashoffset="1"/></g><g fill="#000"><path transform="translate(491.5,292.4) rotate(45)" d="M-7.500 0L-2.800 -4.500V-2.500H2.800V-4.500L7.500 0L2.800 4.500V2.500H-2.800V4.500z"/><path transform="translate(608.5,289.5) rotate(90)" d="M-7.500 0L-2.800 -4.500V-2.500H2.800V-4.500L7.500 0L2.800 4.500V2.500H-2.800V4.500z"/><path transform="translate(725.5,292.4) rotate(-45)" d="M-7.500 0L-2.800 -4.500V-2.500H2.800V-4.500L7.500 0L2.800 4.500V2.500H-2.800V4.500z"/><path transform="translate(488.5,474.5) rotate(0)" d="M-7.500 0L-2.800 -4.500V-2.500H2.800V-4.500L7.500 0L2.800 4.500V2.500H-2.800V4.500z"/><path transform="translate(491.5,657.5) rotate(-45)" d="M-7.500 0L-2.800 -4.500V-2.500H2.800V-4.500L7.500 0L2.800 4.500V2.500H-2.800V4.500z"/><path transform="translate(608.5,660.5) rotate(90)" d="M-7.500 0L-2.800 -4.500V-2.500H2.800V-4.500L7.500 0L2.800 4.500V2.500H-2.800V4.500z"/><path transform="translate(725.5,657.5) rotate(45)" d="M-7.500 0L-2.800 -4.500V-2.500H2.800V-4.500L7.500 0L2.800 4.500V2.500H-2.800V4.500z"/></g></svg>
</div>
<div style="left:1299px;top:116px;width:18px;height:562px;background:#efeeed"></div>
<div style="left:1304px;top:270px;width:8px;height:195px;background:#d2d2d1;border-radius:4px"></div>
<div style="left:52px;top:678px;width:1265px;height:26px;background:#efeeed"></div>
<div style="left:94px;top:687px;width:1164px;height:8px;background:#d2d2d1;border-radius:4px"></div>
<div class="btn" style="left:1299px;top:90px;width:18px;height:26px;"></div>
<svg class="i" style="left:1300px;top:95px;" width="16" height="16" viewBox="0 0 16 16"><circle cx="7.400" cy="7.300" r="7.300" fill="#000"/><path d="M12 12L15.300 15.300" stroke="#000" stroke-width="2.400" stroke-linecap="round"/><text x="7.300" y="10.300" font-size="8.500" font-weight="bold" font-family="Liberation Sans,sans-serif" text-anchor="middle" fill="#fff" letter-spacing="-0.7">1:1</text></svg>
<div class="btn" style="left:1299px;top:678px;width:18px;height:26px;"></div>
<svg class="i" style="left:1300px;top:683px;" width="16" height="16" viewBox="0 0 16 16"><circle cx="7.900" cy="4.750" r="3.300" fill="#fbfbfb" stroke="#000" stroke-width="1.100"/><circle cx="3.900" cy="11.800" r="3.200" fill="#d9f5dc" stroke="#000" stroke-width="1.100"/><circle cx="3.900" cy="11.800" r="1.900" fill="#149a2c"/><circle cx="12.100" cy="11.800" r="3.200" fill="#ffd9ec" stroke="#000" stroke-width="1.100"/><circle cx="12.100" cy="11.800" r="1.900" fill="#ee2c8b"/><rect x="7.300" y="10.300" width="1.400" height="3" fill="#000"/></svg>
<svg class="i" style="left:1336px;top:104px;" width="16" height="16" viewBox="0 0 16 16"><path d="M1 3H8.500L11 5.500V14H1z" fill="none" stroke="#000" stroke-width="2" stroke-linejoin="round"/><path d="M6.800 3.500V8.200H11" fill="none" stroke="#000" stroke-width="1"/><path d="M13 -1.300l1 2.100 2.300 0.300-1.700 1.600 0.400 2.300-2-1.100-2 1.100 0.400-2.300-1.700-1.600 2.300-0.300z" fill="#12881f"/></svg>
<svg class="i" style="left:1336px;top:139px;" width="16" height="16" viewBox="0 0 16 16"><path d="M0 0H5.200L6 2.200H14V6.500H3.500L1.500 14H0z" fill="#000"/><path d="M3.600 7H16.300L14.200 14H1.600z" fill="#000"/></svg>
<svg class="i" style="left:1336px;top:173px;" width="16" height="16" viewBox="0 0 16 16"><path d="M7 0H9V5H12L8 8.600L4 5H7z" fill="#12881f"/><path d="M3.200 8L1 11.300V15.500H15V11.300L12.800 8H11L12.800 11H3.200L5 8z" fill="#000"/><rect x="5" y="12.200" width="5.700" height="1.400" fill="#fff"/></svg>
<svg class="i" style="left:1336px;top:208px;" width="16" height="16" viewBox="0 0 16 16"><rect x="4" y="0.900" width="8" height="1.900" fill="#000"/><path d="M2 4.200H14Q15 4.200 15 5.200V10.500H12.700V8.300H3.300V10.500H1V5.200Q1 4.200 2 4.200z" fill="#333"/><rect x="4.200" y="9.200" width="7.600" height="4.500" fill="#000"/></svg>
<svg class="i" style="left:1336px;top:256px;" width="16" height="16" viewBox="0 0 16 16"><path d="M3.800 5V1.800H11L14.300 5V15H3.800V11.700" fill="none" stroke="#000" stroke-width="1.800" stroke-linejoin="round"/><path d="M9.500 2V6.500H14" fill="none" stroke="#000" stroke-width="0.900"/><path d="M1 7.300H6.500V5.500L10 8.300L6.500 11.100V9.300H1z" fill="#12881f"/></svg>
<svg class="i" style="left:1336px;top:292px;" width="16" height="16" viewBox="0 0 16 16"><path d="M11.200 12.800V14H1V1H7.800L11.200 4.400V7" fill="none" stroke="#000" stroke-width="1.800" stroke-linejoin="round"/><path d="M6.800 1.500V5.500H11" fill="none" stroke="#000" stroke-width="0.900"/><path d="M7.300 8.900H12.500V7.100L16.200 9.900L12.500 12.700V10.900H7.300z" fill="#12881f"/></svg>
<svg class="i" style="left:1336px;top:341px;" width="16" height="16" viewBox="0 0 16 16"><g transform="translate(0,0.900)"><path d="M4 5H10.200Q14 5 14 8T10.500 11.200" fill="none" stroke="#000" stroke-width="2" stroke-linecap="round"/><path d="M4.800 0.900V9.100L0.900 5z" fill="#000"/></g></svg>
<svg class="i" style="left:1336px;top:376px;" width="16" height="16" viewBox="0 0 16 16"><g transform="translate(16.300,1.200) scale(-1,1)"><path d="M4 5H10.200Q14 5 14 8T10.500 11.200" fill="none" stroke="#8c8c8c" stroke-width="2" stroke-linecap="round"/><path d="M4.800 0.900V9.100L0.900 5z" fill="#8c8c8c"/></g></svg>
<svg class="i" style="left:1336px;top:424px;" width="16" height="16" viewBox="0 0 16 16"><rect x="0" y="1" width="11" height="11" fill="#000"/><rect x="4.200" y="6.200" width="12.600" height="11.600" fill="#f6f5f4"/><rect x="5" y="7" width="11.200" height="10" fill="#000"/></svg>
<svg class="i" style="left:1336px;top:460px;" width="16" height="16" viewBox="0 0 16 16"><path d="M2.600 0.700L11.200 11.500M13.900 0.700L5.300 11.500" stroke="#000" stroke-width="1.600" fill="none"/><circle cx="3.600" cy="12.800" r="2.600" fill="none" stroke="#000" stroke-width="1.700"/><circle cx="12.800" cy="12.800" r="2.600" fill="none" stroke="#000" stroke-width="1.700"/></svg>
<svg class="i" style="left:1336px;top:495px;" width="16" height="16" viewBox="0 0 16 16"><path d="M3.500 1.500H0.600V15H13.700V1.500H10.800" fill="none" stroke="#000" stroke-width="1.200"/><rect x="4.200" y="0.200" width="5.800" height="2.600" rx="0.500" fill="#000"/><path d="M3.200 4.200H11V11L8.600 13.300H3.200z" fill="#000"/></svg>
<svg class="i" style="left:1336px;top:544px;" width="16" height="16" viewBox="0 0 16 16"><circle cx="7.400" cy="7.300" r="7.300" fill="#000"/><path d="M12 12L15.300 15.300" stroke="#000" stroke-width="2.400" stroke-linecap="round"/><rect x="3.500" y="3.500" width="8" height="8" fill="none" stroke="#fff" stroke-width="1" stroke-dasharray="1 1"/></svg>
<svg class="i" style="left:1336px;top:579px;" width="16" height="16" viewBox="0 0 16 16"><circle cx="7.400" cy="7.300" r="7.300" fill="#000"/><path d="M12 12L15.300 15.300" stroke="#000" stroke-width="2.400" stroke-linecap="round"/><circle cx="5.300" cy="4.800" r="2.600" fill="#fff"/><rect x="6.500" y="6.500" width="5.500" height="5.500" fill="#fff" stroke="#000" stroke-width="1"/></svg>
<svg class="i" style="left:1336px;top:614px;" width="16" height="16" viewBox="0 0 16 16"><circle cx="7.400" cy="7.300" r="7.300" fill="#000"/><path d="M12 12L15.300 15.300" stroke="#000" stroke-width="2.400" stroke-linecap="round"/><rect x="4.300" y="2.800" width="6.200" height="9.400" fill="none" stroke="#fff" stroke-width="1.300"/></svg>
<div style="left:1326px;top:240px;width:36px;height:1px;background:#e0dcd8"></div>
<div style="left:1326px;top:324px;width:36px;height:1px;background:#e0dcd8"></div>
<div style="left:1326px;top:408px;width:36px;height:1px;background:#e0dcd8"></div>
<div style="left:1326px;top:527px;width:36px;height:1px;background:#e0dcd8"></div>
<svg class="i" style="left:1340px;top:678px" width="8" height="12" viewBox="0 0 8 12"><path d="M0.800 -0.100V12.100L7.400 6z" fill="#000"/></svg>
<svg class="i" style="left:0;top:716px" width="1280" height="16" viewBox="0 0 1280 16"><rect x="1" y="0" width="16" height="16" fill="#fff"/><path d="M1.300 0.300l15.400 15.400M16.700 0.300l-15.400 15.400" stroke="#651212" stroke-width="1.800"/><rect x="18" y="0" width="16" height="16" fill="#000000"/><rect x="35" y="0" width="16" height="16" fill="#1a1a1a"/><rect x="52" y="0" width="16" height="16" fill="#333333"/><rect x="69" y="0" width="16" height="16" fill="#4d4d4d"/><rect x="86" y="0" width="16" height="16" fill="#666666"/><rect x="103" y="0" width="16" height="16" fill="#808080"/><rect x="120" y="0" width="16" height="16" fill="#999999"/><rect x="137" y="0" width="16" height="16" fill="#b3b3b3"/><rect x="154" y="0" width="16" height="16" fill="#cccccc"/><rect x="171" y="0" width="16" height="16" fill="#e6e6e6"/><rect x="188" y="0" width="16" height="16" fill="#ececec"/><rect x="205" y="0" width="16" height="16" fill="#f2f2f2"/><rect x="222" y="0" width="16" height="16" fill="#f9f9f9"/><rect x="239" y="0" width="16" height="16" fill="#ffffff"/><rect x="256" y="0" width="16" height="16" fill="#800000"/><rect x="273" y="0" width="16" height="16" fill="#ff0000"/><rect x="290" y="0" width="16" height="16" fill="#808000"/><rect x="307" y="0" width="16" height="16" fill="#ffff00"/><rect x="324" y="0" width="16" height="16" fill="#008000"/><rect x="341" y="0" width="16" height="16" fill="#00ff00"/><rect x="358" y="0" width="16" height="16" fill="#008080"/><rect x="375" y="0" width="16" height="16" fill="#00ffff"/><rect x="392" y="0" width="16" height="16" fill="#000080"/><rect x="409" y="0" width="16" height="16" fill="#0000ff"/><rect x="426" y="0" width="16" height="16" fill="#800080"/><rect x="443" y="0" width="16" height="16" fill="#ff00ff"/><rect x="460" y="0" width="16" height="16" fill="#2b0000"/><rect x="477" y="0" width="16" height="16" fill="#550000"/><rect x="494" y="0" width="16" height="16" fill="#800000"/><rect x="511" y="0" width="16" height="16" fill="#aa0000"/><rect x="528" y="0" width="16" height="16" fill="#d40000"/><rect x="545" y="0" width="16" height="16" fill="#ff0000"/><rect x="562" y="0" width="16" height="16" fill="#ff2a2a"/><rect x="579" y="0" width="16" height="16" fill="#ff5555"/><rect x="596" y="0" width="16" height="16" fill="#ff8080"/><rect x="613" y="0" width="16" height="16" fill="#ffaaaa"/><rect x="630" y="0" width="16" height="16" fill="#ffd5d5"/><rect x="647" y="0" width="16" height="16" fill="#280b0b"/><rect x="664" y="0" width="16" height="16" fill="#501616"/><rect x="681" y="0" width="16" height="16" fill="#782121"/><rect x="698" y="0" width="16" height="16" fill="#a02c2c"/><rect x="715" y="0" width="16" height="16" fill="#c83737"/><rect x="732" y="0" width="16" height="16" fill="#d35f5f"/><rect x="749" y="0" width="16" height="16" fill="#de8787"/><rect x="766" y="0" width="16" height="16" fill="#e9afaf"/><rect x="783" y="0" width="16" height="16" fill="#f4d7d7"/><rect x="800" y="0" width="16" height="16" fill="#241c1c"/><rect x="817" y="0" width="16" height="16" fill="#483737"/><rect x="834" y="0" width="16" height="16" fill="#6c5353"/><rect x="851" y="0" width="16" height="16" fill="#916f6f"/><rect x="868" y="0" width="16" height="16" fill="#ac9393"/><rect x="885" y="0" width="16" height="16" fill="#c8b7b7"/><rect x="902" y="0" width="16" height="16" fill="#e3dbdb"/><rect x="919" y="0" width="16" height="16" fill="#2b1100"/><rect x="936" y="0" width="16" height="16" fill="#552200"/><rect x="953" y="0" width="16" height="16" fill="#803300"/><rect x="970" y="0" width="16" height="16" fill="#aa4400"/><rect x="987" y="0" width="16" height="16" fill="#d45500"/><rect x="1004" y="0" width="16" height="16" fill="#ff6600"/><rect x="1021" y="0" width="16" height="16" fill="#ff7f2a"/><rect x="1038" y="0" width="16" height="16" fill="#ff9955"/><rect x="1055" y="0" width="16" height="16" fill="#ffb380"/><rect x="1072" y="0" width="16" height="16" fill="#ffccaa"/><rect x="1089" y="0" width="16" height="16" fill="#ffe6d5"/><rect x="1106" y="0" width="16" height="16" fill="#28170b"/><rect x="1123" y="0" width="16" height="16" fill="#502d16"/><rect x="1140" y="0" width="16" height="16" fill="#784421"/><rect x="1157" y="0" width="16" height="16" fill="#a05a2c"/><rect x="1174" y="0" width="16" height="16" fill="#c87137"/><rect x="1191" y="0" width="16" height="16" fill="#d38d5f"/><rect x="1208" y="0" width="16" height="16" fill="#deaa87"/><rect x="1225" y="0" width="16" height="16" fill="#e9c6af"/><rect x="1242" y="0" width="16" height="16" fill="#f4e3d7"/><rect x="1259" y="0" width="16" height="16" fill="#241f1c"/></svg>
<svg class="i" style="left:1290px;top:712px" width="50" height="14" viewBox="0 0 50 14" fill="none" stroke="#000" stroke-width="2"><path d="M2.800 10.500L8.200 5.200l5.400 5.300"/><path d="M33.200 4l5.400 5.300L44 4"/></svg>
<div class="btn" style="left:1345px;top:705px;width:19px;height:28px;"></div>
<svg class="i" style="left:1348px;top:713px" width="14" height="12" viewBox="0 0 14 12" fill="#000"><rect x="0" y="0.200" width="14" height="1.800"/><rect x="0" y="5.200" width="14" height="1.800"/><rect x="0" y="10.100" width="14" height="1.800"/></svg>
<span class="t" style="top:735.00px;font-size:12px;line-height:16px;color:#929595;left:1.71px;transform:scaleX(1.0007);transform-origin:0 0;">Riempimento:</span>
<span class="t" style="top:752.00px;font-size:12px;line-height:16px;color:#929595;left:22.18px;transform:scaleX(1.0178);transform-origin:0 0;">Contorno:</span>
<div style="left:91px;top:734px;width:82px;height:16px;background:#ff0000;border-radius:2.500px"></div>
<span class="t" style="top:752.00px;font-size:12px;line-height:16px;color:#929595;left:90.91px;transform:scaleX(0.9828);transform-origin:0 0;font-weight:bold;">Non impostato</span>
<span class="t" style="top:752.00px;font-size:12px;line-height:16px;color:#929595;left:182.87px;transform:scaleX(0.9189);transform-origin:0 0;">0,265</span>
<span class="t" style="top:743.00px;font-size:12px;line-height:16px;color:#8f9191;left:217.26px;transform:scaleX(0.9542);transform-origin:0 0;">O:</span>
<div class="sp" style="left:231px;top:734px;width:72px;height:34px;"></div>
<div style="left:268px;top:735px;width:1px;height:32px;background:#ebe9e7"></div>
<div style="left:285px;top:735px;width:1px;height:32px;background:#ebe9e7"></div>
<svg class="i" style="left:0;top:0" width="1364" height="766" viewBox="0 0 1364 766"><rect x="270.0" y="750.0" width="14" height="2" fill="#8f8f8f"/><rect x="287.0" y="750.0" width="14" height="2" fill="#e3e3e3"/><rect x="293.0" y="744.0" width="2" height="14" fill="#e3e3e3"/></svg>
<span class="t" style="top:743.00px;font-size:12px;line-height:16px;color:#2e3436;left:238.47px;transform:scaleX(0.9067);transform-origin:0 0;">100</span>
<div style="left:316px;top:742px;width:3px;height:17px;background:#7e9ccb"></div>
<span class="t" style="top:743.00px;font-size:12px;line-height:16px;color:#929595;left:324.54px;transform:scaleX(0.9798);transform-origin:0 0;">Livello 1</span>
<svg class="i" style="left:388px;top:742.5px;" width="16" height="16" viewBox="0 0 16 16"><ellipse cx="8" cy="9" rx="6.300" ry="4.100" fill="#fff" stroke="#000" stroke-width="1.600"/><circle cx="7.900" cy="8.900" r="1.900" fill="#000"/><path d="M8 1.200V4.700M2.300 3.400L4.200 5.700M13.700 3.400L11.800 5.700" stroke="#000" stroke-width="1.500" fill="none"/></svg>
<svg class="i" style="left:426px;top:743px;" width="16" height="16" viewBox="0 0 16 16"><rect x="1" y="7.300" width="10" height="7.500" fill="#000"/><path d="M8.300 8V4.450a2.450 2.450 0 0 1 4.900 0V6.800" fill="none" stroke="#000" stroke-width="1.800"/></svg>
<div style="left:450px;top:739px;width:1px;height:24px;background:#e0dcd8"></div>
<span class="t" style="top:735.00px;font-size:12px;line-height:16px;color:#929595;left:466.95px;transform:scaleX(0.9358);transform-origin:0 0;font-weight:bold;">Proiezione dinamica</span>
<span class="t" style="top:735.00px;font-size:12px;line-height:16px;color:#929595;left:579.51px;transform:scaleX(0.9685);transform-origin:0 0;">estrusione di 0,000000 pt in livello</span>
<span class="t" style="top:735.00px;font-size:12px;line-height:16px;color:#929595;left:758.19px;transform:scaleX(0.8788);transform-origin:0 0;font-weight:bold;">Livello 1</span>
<span class="t" style="top:735.00px;font-size:12px;line-height:16px;color:#929595;left:802.65px;transform:scaleX(0.9600);transform-origin:0 0;">. Fai clic nuovamente la selezione per alternare le</span>
<span class="t" style="top:752.00px;font-size:12px;line-height:16px;color:#929595;left:466.90px;transform:scaleX(1.0101);transform-origin:0 0;">maniglie di ridimensionamento/rotazione.</span>
<div style="left:1066px;top:735px;width:1px;height:31px;background:#e0dcd8"></div>
<span class="t" style="top:735.00px;font-size:12px;line-height:16px;color:#8f9191;left:1077.15px;transform:scaleX(0.9225);transform-origin:0 0;">X:</span>
<span class="t" style="top:752.00px;font-size:12px;line-height:16px;color:#8f9191;left:1077.16px;transform:scaleX(0.9220);transform-origin:0 0;">Y:</span>
<span class="t" style="top:735.00px;font-size:12px;line-height:16px;color:#929595;left:1100.49px;transform:scaleX(0.9487);transform-origin:0 0;">-75,17</span>
<span class="t" style="top:752.00px;font-size:12px;line-height:16px;color:#929595;left:1100.49px;transform:scaleX(0.9487);transform-origin:0 0;">-39,42</span>
<span class="t" style="top:743.00px;font-size:12px;line-height:16px;color:#8f9191;left:1142.04px;transform:scaleX(0.9361);transform-origin:0 0;">Z:</span>
<div class="sp" style="left:1152px;top:734px;width:88px;height:34px;"></div>
<div style="left:1195px;top:735px;width:1px;height:32px;background:#ebe9e7"></div>
<div style="left:1216px;top:735px;width:1px;height:32px;background:#ebe9e7"></div>
<svg class="i" style="left:0;top:0" width="1364" height="766" viewBox="0 0 1364 766"><rect x="1199.0" y="750.0" width="14" height="2" fill="#8f8f8f"/><rect x="1221.0" y="750.0" width="14" height="2" fill="#8f8f8f"/><rect x="1227.0" y="744.0" width="2" height="14" fill="#8f8f8f"/></svg>
<span class="t" style="top:743.00px;font-size:12px;line-height:16px;color:#2e3436;left:1163.36px;transform:scaleX(0.9174);transform-origin:0 0;">50%</span>
<span class="t" style="top:743.00px;font-size:12px;line-height:16px;color:#8f9191;left:1250.00px;transform:scaleX(0.8165);transform-origin:0 0;">R:</span>
<div class="sp" style="left:1260px;top:734px;width:94px;height:34px;"></div>
<div style="left:1309px;top:735px;width:1px;height:32px;background:#ebe9e7"></div>
<div style="left:1330px;top:735px;width:1px;height:32px;background:#ebe9e7"></div>
<svg class="i" style="left:0;top:0" width="1364" height="766" viewBox="0 0 1364 766"><rect x="1313.0" y="750.0" width="14" height="2" fill="#8f8f8f"/><rect x="1335.0" y="750.0" width="14" height="2" fill="#8f8f8f"/><rect x="1341.0" y="744.0" width="2" height="14" fill="#8f8f8f"/></svg>
<span class="t" style="top:743.00px;font-size:12px;line-height:16px;color:#2e3436;left:1273.97px;transform:scaleX(0.9271);transform-origin:0 0;">0,00°</span>
</div>
<div style="position:absolute;left:0;top:766px;width:1364px;height:2px;background:#0a0a0a"></div>
<div id="dlgsh"></div><div id="dlg">
<div style="left:0px;top:0px;width:273px;height:30px;background:#fff"></div>
<svg class="i" style="left:8px;top:6px;" width="16" height="16" viewBox="0 0 16 16"><defs><linearGradient id="ikg2" x1="0.62" y1="0.05" x2="0.35" y2="1"><stop offset="0" stop-color="#ffffff"/><stop offset="0.38" stop-color="#f0f4f9"/><stop offset="0.62" stop-color="#7186a0"/><stop offset="0.85" stop-color="#1a2430"/><stop offset="1" stop-color="#000"/></linearGradient></defs><path d="M7 0.600Q7.800 -0.200 8.600 0.600L15.200 7.200Q15.700 7.900 15 8.500L13.200 9.800H2.600L0.600 8.500Q-0.100 7.900 0.500 7.200z" fill="#000"/><path d="M7.900 1.400L14 7.300Q11 8.400 7.800 8.400T2.400 7.600z" fill="url(#ikg2)"/><path d="M2.600 9.400H13.200L11 11.200Q10.300 11.700 11 12.100L11.600 12.500Q12 12.900 11.500 13.300L8.600 15.200Q7.900 15.600 7.200 15.200L4.600 13.400Q4.100 13 4.600 12.600L5.300 12.100Q5.900 11.600 5.200 11.200z" fill="#000"/><ellipse cx="2.800" cy="13.400" rx="1" ry="0.500" fill="#000"/><ellipse cx="14" cy="11.500" rx="1" ry="0.500" fill="#000"/><ellipse cx="13.500" cy="13.400" rx="0.600" ry="0.500" fill="#000"/></svg>
<span class="t" style="top:7.00px;font-size:12px;line-height:16px;color:#000;left:29.38px;transform:scaleX(1.0387);transform-origin:0 0;">Aggiungi livello</span>
<svg class="i" style="left:252px;top:8px" width="12" height="12" viewBox="0 0 12 12"><path d="M1 1l10 10M11 1L1 11" stroke="#111" stroke-width="1.100" fill="none"/></svg>
<span class="t" style="top:45.00px;font-size:12px;line-height:16px;color:#2e3436;left:1.50px;transform:scaleX(1.0145);transform-origin:0 0;">Nome del livello:</span>
<div style="left:94px;top:36px;width:177px;height:34px;background:#fff;border:2px solid #4a82c8;border-radius:5px"></div>
<div style="left:103px;top:44px;width:43px;height:17px;background:#3a84e2"></div>
<span class="t" style="top:45.00px;font-size:12px;line-height:16px;color:#fff;left:102.84px;transform:scaleX(0.9779);transform-origin:0 0;">Livello 2</span>
<span class="t" style="top:83.00px;font-size:12px;line-height:16px;color:#2e3436;left:1.56px;transform:scaleX(0.9571);transform-origin:0 0;">Posizione:</span>
<div class="btn" style="left:94px;top:74px;width:177px;height:34px;background:linear-gradient(#f6f5f4,#eeedeb);border-color:#cdc7c2"></div>
<span class="t" style="top:83.00px;font-size:12px;line-height:16px;color:#2e3436;left:105.66px;transform:scaleX(0.9965);transform-origin:0 0;">Sopra l'attuale</span>
<svg class="i" style="left:247px;top:88px" width="12" height="7" viewBox="0 0 12 7"><path d="M0.300 0.300h11.400L6 6.300z" fill="#2e3436"/></svg>
<div class="btn" style="left:85px;top:112px;width:91px;height:34px;background:linear-gradient(#f6f5f4,#eeedeb);border-color:#cdc7c2"></div>
<span class="t" style="top:121.00px;font-size:12px;line-height:16px;color:#2e3436;left:110.28px;transform:scaleX(1.0073);transform-origin:0 0;">Annulla</span>
<div class="btn" style="left:180px;top:112px;width:91px;height:34px;background:linear-gradient(#f6f5f4,#eeedeb);border-color:#cdc7c2"></div>
<span class="t" style="top:121.00px;font-size:12px;line-height:16px;color:#2e3436;left:200.97px;transform:scaleX(1.0682);transform-origin:0 0;">Aggiungi</span>
</div>
</body></html>
